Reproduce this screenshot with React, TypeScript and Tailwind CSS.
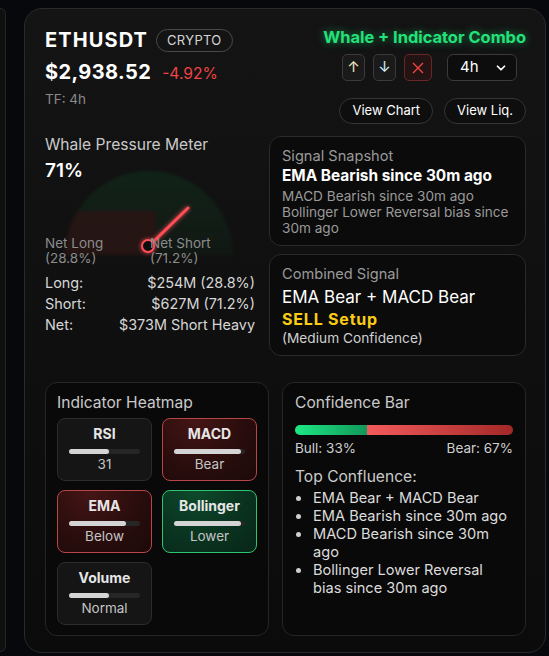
import { ChevronDown } from "lucide-react";

const tiles = [
  { name: "RSI", value: "31", fill: 56, tone: "neutral" },
  { name: "MACD", value: "Bear", fill: 94, tone: "bear" },
  { name: "EMA", value: "Below", fill: 80, tone: "bear" },
  { name: "Bollinger", value: "Lower", fill: 94, tone: "bull" },
  { name: "Volume", value: "Normal", fill: 57, tone: "neutral" },
];

const confluence = [
  "EMA Bear + MACD Bear",
  "EMA Bearish since 30m ago",
  "MACD Bearish since 30m ago",
  "Bollinger Lower Reversal bias since 30m ago",
];

function tileClass(tone: string) {
  if (tone === "bear")
    return "border-[#b94646] bg-[radial-gradient(ellipse_at_35%_0%,#461515_0%,#2a0d0d_55%,#1c0909_100%)]";
  if (tone === "bull")
    return "border-[#2fc46e] bg-[radial-gradient(ellipse_at_35%_0%,#0d4a2a_0%,#0a3320_55%,#082618_100%)]";
  return "border-[#2c2c2c] bg-[#151515]";
}

function Gauge() {
  return (
    <div className="relative h-[50px]">
      <div className="absolute left-[20px] top-[-12px] h-[84px] w-[168px] overflow-hidden rounded-t-full bg-gradient-to-b from-[#10271a] to-[#121a15] opacity-80 blur-[1.5px]">
        <div className="absolute bottom-0 left-0 h-[44px] w-[54%] bg-[#2a1614]" />
      </div>
      <svg className="absolute left-0 top-0 overflow-visible" width="212" height="90">
        <defs>
          <filter id="glow" x="-50%" y="-50%" width="200%" height="200%">
            <feGaussianBlur stdDeviation="2.2" result="b" />
            <feMerge>
              <feMergeNode in="b" />
              <feMergeNode in="SourceGraphic" />
            </feMerge>
          </filter>
        </defs>
        <g filter="url(#glow)">
          <line x1="107" y1="60" x2="143" y2="25" stroke="#ff4d57" strokeWidth="3" strokeLinecap="round" />
          <circle cx="103" cy="63" r="6" fill="#111" stroke="#ff4d57" strokeWidth="2" />
        </g>
      </svg>
    </div>
  );
}

export default function App() {
  return (
    <div className="flex h-[656px] w-[549px] overflow-hidden bg-[#07080b] font-['Inter',sans-serif]">
      <div className="mt-[8px] h-[644px] w-[6px] shrink-0 rounded-r-[16px] border-y border-r border-[#262626] bg-[#0f0f10]" />

      <div className="ml-[18px] mt-[8px] flex h-[645px] w-[522px] shrink-0 flex-col rounded-[18px] border border-[#2a2a2a] bg-gradient-to-b from-[#141414] to-[#0b0b0b] pl-[20px] pr-[19px] pt-[17px]">
        {/* header */}
        <div className="flex justify-between">
          <div>
            <div className="flex items-center">
              <span className="text-[20px] font-bold leading-[28px] tracking-[1.1px] text-white">ETHUSDT</span>
              <span className="ml-[8px] flex h-[23px] items-center rounded-full border border-[#4a4a4a] px-[10px] text-[13px] leading-none tracking-wide text-[#d4d4d4]">
                CRYPTO
              </span>
            </div>
            <div className="mt-[4px] flex items-baseline">
              <span className="text-[20px] font-bold leading-[28px] tracking-[0.4px] text-white">$2,938.52</span>
              <span className="ml-[11px] text-[15.6px] text-[#ef4444]">-4.92%</span>
            </div>
            <div className="mt-[3px] text-[13.5px] text-[#8a8a8a]">TF: 4h</div>
          </div>

          <div className="flex flex-col items-end">
            <div className="text-[16.4px] font-bold leading-[22px] text-[#22e27a] [text-shadow:0_0_8px_rgba(34,226,122,0.55)]">
              Whale + Indicator Combo
            </div>
            <div className="mr-[9px] mt-[6px] flex items-center gap-[8px]">
              <button className="flex h-[27px] w-[23px] items-center justify-center rounded-[5px] border border-[#3a3a3a] bg-[#1a1a1a] text-[15px] text-[#f3e6c4]">
                ↑
              </button>
              <button className="flex h-[27px] w-[23px] items-center justify-center rounded-[5px] border border-[#3a3a3a] bg-[#1a1a1a] text-[15px] text-[#cfeeff]">
                ↓
              </button>
              <button className="flex h-[27px] w-[28px] items-center justify-center rounded-[5px] border border-[#6a2626] bg-[#241313] text-[#ef4444]">
                <svg width="12" height="12" viewBox="0 0 12 12">
                  <path d="M1 1 L11 11 M11 1 L1 11" stroke="#ef4444" strokeWidth="1.4" />
                </svg>
              </button>
              <div className="ml-[7px] flex h-[27px] w-[70px] items-center justify-between rounded-[6px] border border-[#3a3a3a] bg-[#0d0d0d] pl-[12px] pr-[8px] text-[15px] text-white">
                4h
                <ChevronDown className="h-[14px] w-[14px]" strokeWidth={3} />
              </div>
            </div>
            <div className="mt-[17px] flex gap-[11px]">
              <button className="h-[26px] rounded-full border border-[#353535] bg-[#0e0e0e] px-[12px] text-[13px] text-white">
                View Chart
              </button>
              <button className="h-[26px] rounded-full border border-[#353535] bg-[#0e0e0e] px-[12px] text-[13px] text-white">
                View Liq.
              </button>
            </div>
          </div>
        </div>

        {/* middle */}
        <div className="mt-[11px] flex gap-[14px]">
          <div className="w-[210px] shrink-0">
            <div className="text-[15.6px] leading-[20px] text-[#c9c9c9]">Whale Pressure Meter</div>
            <div className="mt-[4px] text-[19px] font-semibold leading-[24px] text-white">71%</div>
            <Gauge />
            <div className="relative mt-[3px] grid grid-cols-[105px_1fr] text-[13.5px] leading-[15px] text-[#8c8c8c]">
              <div>
                Net Long
                <br />
                (28.8%)
              </div>
              <div>
                Net Short
                <br />
                (71.2%)
              </div>
            </div>
            <div className="mt-[7px] space-y-[0.5px] text-[14.4px] leading-[20.5px] text-[#d6d6d6]">
              <div className="flex justify-between">
                <span>Long:</span>
                <span>$254M (28.8%)</span>
              </div>
              <div className="flex justify-between">
                <span>Short:</span>
                <span>$627M (71.2%)</span>
              </div>
              <div className="flex justify-between">
                <span>Net:</span>
                <span>$373M Short Heavy</span>
              </div>
            </div>
          </div>

          <div className="mt-[1px] flex flex-1 flex-col gap-[8px]">
            <div className="h-[110px] rounded-[12px] border border-[#2a2a2a] bg-[#0b0b0b] px-[12px] pt-[10px]">
              <div className="text-[14.6px] leading-[18px] text-[#9a9a9a]">Signal Snapshot</div>
              <div className="mt-[1px] text-[15.4px] font-bold leading-[20px] text-white">EMA Bearish since 30m ago</div>
              <div className="mt-[2px] text-[13.6px] leading-[16px] text-[#9a9a9a]">
                MACD Bearish since 30m ago
                <br />
                Bollinger Lower Reversal bias since 30m ago
              </div>
            </div>
            <div className="h-[102px] rounded-[12px] border border-[#2a2a2a] bg-[#0b0b0b] px-[12px] pt-[10px]">
              <div className="text-[14.6px] leading-[18px] text-[#9a9a9a]">Combined Signal</div>
              <div className="mt-[3px] text-[17px] leading-[22px] text-white">EMA Bear + MACD Bear</div>
              <div className="text-[16px] font-bold leading-[22px] tracking-[0.8px] text-[#facc15]">SELL Setup</div>
              <div className="text-[13.7px] leading-[16px] text-[#d0d0d0]">(Medium Confidence)</div>
            </div>
          </div>
        </div>

        {/* bottom */}
        <div className="mt-[26px] flex gap-[13px]">
          <div className="h-[254px] w-[224px] shrink-0 rounded-[12px] border border-[#262626] bg-[#090909] px-[11px] pt-[10px]">
            <div className="text-[15.6px] leading-[20px] text-[#c9c9c9]">Indicator Heatmap</div>
            <div className="mt-[5px] grid grid-cols-2 gap-x-[10px] gap-y-[9px]">
              {tiles.map((t) => (
                <div key={t.name} className={`h-[63px] rounded-[8px] border px-[11px] pt-[5px] text-center ${tileClass(t.tone)}`}>
                  <div className="text-[14px] font-bold leading-[20px] text-[#e6e6e6]">{t.name}</div>
                  <div className="mt-[5px] h-[5px] w-full rounded-full bg-[#262626]">
                    <div className="h-full rounded-full bg-[#d4d4d4]" style={{ width: `${t.fill}%` }} />
                  </div>
                  <div className="mt-[1px] text-[13.5px] leading-[18px] text-[#c4c4c4]">{t.value}</div>
                </div>
              ))}
            </div>
          </div>

          <div className="h-[254px] flex-1 rounded-[12px] border border-[#262626] bg-[#090909] px-[12px] pt-[10px]">
            <div className="text-[15.6px] leading-[20px] text-[#c9c9c9]">Confidence Bar</div>
            <div className="mt-[12px] flex h-[10px] overflow-hidden rounded-full">
              <div className="h-full w-[33%] bg-gradient-to-r from-[#1de884] to-[#12995a]" />
              <div className="h-full flex-1 bg-gradient-to-r from-[#f45b5b] to-[#a32828]" />
            </div>
            <div className="mt-[5px] flex justify-between text-[13.5px] leading-[17px] text-[#cfcfcf]">
              <span>Bull: 33%</span>
              <span>Bear: 67%</span>
            </div>
            <div className="mt-[10px] text-[15.6px] leading-[20px] text-[#c9c9c9]">Top Confluence:</div>
            <ul className="mt-[2px] list-disc pl-[17px] text-[14.6px] leading-[18px] text-[#dcdcdc] marker:text-[#cfcfcf]">
              {confluence.map((c) => (
                <li key={c} className="pl-[1px]">{c}</li>
              ))}
            </ul>
          </div>
        </div>
      </div>
    </div>
  );
}
